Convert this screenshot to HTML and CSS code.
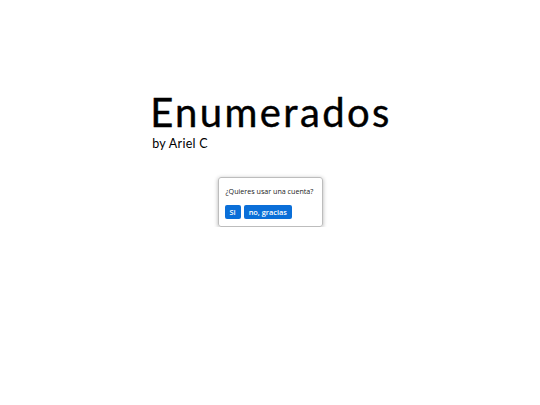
FILE: index.html
```html
<!DOCTYPE html>
<html>
<head>
<meta charset="utf-8">
<link rel="stylesheet" href="styles.css">
</head>
<body>
<div class="page">
  <header class="brand">
    <h1 class="title">Enumerados</h1>
    <div class="byline">by Ariel C</div>
  </header>
  <div class="dialog">
    <p class="question">¿Quieres usar una cuenta?</p>
    <div class="actions">
      <button class="btn">Si</button>
      <button class="btn">no, gracias</button>
    </div>
  </div>
</div>
</body>
</html>
```
FILE: styles.css
```css
html, body { margin: 0; padding: 0; background: #fff; }
.page {
  display: flex;
  flex-direction: column;
  align-items: center;
  padding-top: 97px;
}
.brand { display: flex; flex-direction: column; padding-left: 2px; }
.title {
  margin: 0;
  font-family: "Lato", sans-serif;
  font-weight: 400;
  font-size: 40px;
  line-height: 30px;
  color: #000;
  letter-spacing: 2.4px;
  -webkit-text-stroke: 0.4px #000;
}
.byline {
  font-family: "Lato", sans-serif;
  font-size: 12.5px;
  line-height: 13px;
  margin-left: 2px;
  margin-top: 10px;
  color: #000;
  letter-spacing: 0.3px;
}
.dialog {
  margin-top: 27px;
  width: 105px;
  box-sizing: border-box;
  border: 1px solid #bdbdbd;
  border-radius: 3px;
  box-shadow: 0 1px 4px rgba(0,0,0,0.3);
  padding: 8px 6px 7px 7px;
  font-family: "Open Sans", sans-serif;
}
.question {
  margin: 0;
  font-size: 7.15px;
  line-height: 10px;
  color: #222;
  white-space: nowrap;
}
.actions { display: flex; gap: 3px; margin-top: 9px; margin-left: -1px; }
.btn {
  font-family: "Open Sans", sans-serif;
  font-size: 7.4px;
  font-weight: 600;
  line-height: 10px;
  padding: 2px 5px;
  border: none;
  border-radius: 2px;
  background: #0b6fd8;
  color: #fff;
  white-space: nowrap;
}
```
